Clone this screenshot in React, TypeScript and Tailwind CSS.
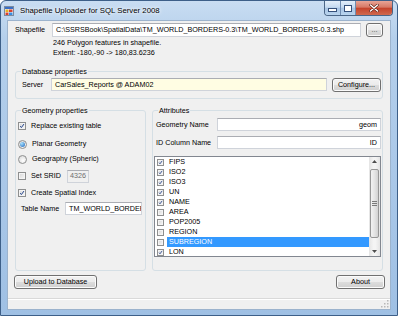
import React from 'react';

const attributes = [
  { name: 'FIPS', checked: true },
  { name: 'ISO2', checked: true },
  { name: 'ISO3', checked: true },
  { name: 'UN', checked: true },
  { name: 'NAME', checked: true },
  { name: 'AREA', checked: false },
  { name: 'POP2005', checked: false },
  { name: 'REGION', checked: false },
  { name: 'SUBREGION', checked: false, selected: true },
  { name: 'LON', checked: true },
];

function Check({ checked, small }: { checked?: boolean; small?: boolean }) {
  return (
    <span
      className={
        (small ? 'w-[7px] h-[7px]' : 'w-[8px] h-[8px]') +
        ' shrink-0 flex items-center justify-center border border-[#8e8f8f] bg-[linear-gradient(135deg,#d6d6d6,#f7f7f7)] shadow-[inset_0_0_0_1px_#f4f4f4]'
      }
    >
      {checked && (
        <svg viewBox="0 0 8 8" className="w-full h-full">
          <path d="M1.6 4.2 L3.2 6.1 L6.6 1.4" fill="none" stroke="#22438c" strokeWidth="1.3" />
        </svg>
      )}
    </span>
  );
}

function Radio({ checked }: { checked?: boolean }) {
  return (
    <span className="w-[9px] h-[9px] shrink-0 rounded-full border border-[#8e8f8f] bg-[radial-gradient(circle_at_60%_65%,#ffffff,#d4d4d4)] flex items-center justify-center">
      {checked && (
        <span className="w-[5px] h-[5px] rounded-full bg-[radial-gradient(circle_at_35%_30%,#a6e1ff,#1f63b8)]" />
      )}
    </span>
  );
}

function TextBox({
  className,
  children,
}: {
  className?: string;
  children?: React.ReactNode;
}) {
  return (
    <div
      className={
        'flex items-center px-[3px] border border-[#cfd3da] border-t-[#abadb3] whitespace-nowrap overflow-hidden ' +
        (className ?? '')
      }
    >
      {children}
    </div>
  );
}

function Button({ className, children }: { className?: string; children?: React.ReactNode }) {
  return (
    <div
      className={
        'flex items-center justify-center rounded-[3px] border border-[#707070] bg-[linear-gradient(to_bottom,#f2f2f2_0%,#ebebeb_50%,#dddddd_50%,#cfcfcf_100%)] shadow-[inset_0_0_0_1px_#fbfbfb] ' +
        (className ?? '')
      }
    >
      {children}
    </div>
  );
}

function AppIcon() {
  return (
    <svg viewBox="0 0 10 10" className="w-[10px] h-[10px]">
      <rect x="0.5" y="0.5" width="9" height="9" fill="#f4f4f4" stroke="#7a8aa0" />
      <rect x="1" y="1" width="8" height="2" fill="#3a6fc4" />
      <rect x="1.5" y="3.5" width="3" height="2.5" fill="#e8b020" />
      <rect x="5" y="3.5" width="3.5" height="2.5" fill="#d8412f" />
      <rect x="1.5" y="6.5" width="3" height="2.5" fill="#d8412f" />
      <rect x="5" y="6.5" width="3.5" height="2.5" fill="#3a8de0" />
    </svg>
  );
}

function CaptionButtons() {
  return (
    <div className="flex self-start h-[15px] mr-[4px] rounded-b-[4px] border border-t-0 border-[#4b6687] overflow-hidden">
      <div className="w-[16px] h-full flex items-center justify-center border-r border-[#6f8cb0] bg-[linear-gradient(to_bottom,#e3eefa_0%,#c5daf0_45%,#a8c4e4_50%,#b9d4ee_100%)]">
        <span className="w-[7px] h-[2px] mt-[4px] bg-white border border-[#35507a] box-content" />
      </div>
      <div className="w-[15px] h-full flex items-center justify-center border-r border-[#6f8cb0] bg-[linear-gradient(to_bottom,#e3eefa_0%,#c5daf0_45%,#a8c4e4_50%,#b9d4ee_100%)]">
        <span className="w-[6px] h-[5px] border-[2px] border-t-[3px] border-white outline outline-1 outline-[#35507a]" />
      </div>
      <div className="w-[36px] h-full flex items-center justify-center bg-[linear-gradient(to_bottom,#e8a496_0%,#d67865_45%,#c4422b_50%,#d06a4f_100%)]">
        <svg viewBox="0 0 10 8" className="w-[10px] h-[8px]">
          <path d="M1.5 1 L8.5 7 M8.5 1 L1.5 7" stroke="#5a1c12" strokeWidth="2.6" strokeLinecap="round" />
          <path d="M1.5 1 L8.5 7 M8.5 1 L1.5 7" stroke="#ffffff" strokeWidth="1.5" strokeLinecap="round" />
        </svg>
      </div>
    </div>
  );
}

function ScrollBar() {
  return (
    <div className="w-[11px] h-full flex flex-col bg-[linear-gradient(to_right,#e4e4e4,#f4f4f4_40%,#f4f4f4_60%,#e4e4e4)]">
      <div className="h-[10px] flex items-center justify-center">
        <svg viewBox="0 0 5 3" className="w-[5px] h-[3px]">
          <path d="M0 3 L2.5 0 L5 3 Z" fill="#4d4d4d" />
        </svg>
      </div>
      <div className="flex-1 pt-[2px] pb-[9px] px-[1px] flex flex-col">
        <div className="h-[69px] rounded-[2px] border border-[#969696] bg-[linear-gradient(to_right,#f2f2f2,#e4e4e4_50%,#d2d2d2)] flex flex-col items-center justify-center gap-[1px]">
          <span className="w-[5px] h-[1px] bg-[#7a7a7a]" />
          <span className="w-[5px] h-[1px] bg-[#7a7a7a]" />
          <span className="w-[5px] h-[1px] bg-[#7a7a7a]" />
        </div>
      </div>
      <div className="h-[10px] flex items-center justify-center">
        <svg viewBox="0 0 5 3" className="w-[5px] h-[3px]">
          <path d="M0 0 L2.5 3 L5 0 Z" fill="#4d4d4d" />
        </svg>
      </div>
    </div>
  );
}

export default function App() {
  return (
    <div className="w-[398px] h-[316px] overflow-hidden font-['Liberation_Sans',Arial,sans-serif] text-[7.2px] leading-[10px] text-black">
      <div className="w-full h-full flex flex-col rounded-t-[6px] border border-[#3d5f88] bg-[linear-gradient(to_bottom,#c9ddf2_0%,#b4cfeb_12%,#a9c7e8_60%,#9fc0e4_100%)]">
        {/* title bar */}
        <div className="h-[19px] flex items-start shrink-0">
          <div className="h-full flex items-center pl-[3px] gap-[6px] flex-1">
            <AppIcon />
            <span className="text-[7.8px] [text-shadow:0_0_5px_#ffffff,0_0_3px_#ffffff]">
              Shapefile Uploader for SQL Server 2008
            </span>
          </div>
          <CaptionButtons />
        </div>

        {/* client area */}
        <div className="flex-1 mx-[6px] mb-[5px] border border-[#9cb3cd] bg-[#f0f0f0] flex flex-col">
          {/* shapefile row */}
          <div className="flex items-center mt-[2px] pl-[7px] h-[14px]">
            <span className="w-[37px]">Shapefile</span>
            <TextBox className="w-[309px] h-[14px] bg-white">
              C:\SSRSBook\SpatialData\TM_WORLD_BORDERS-0.3\TM_WORLD_BORDERS-0.3.shp
            </TextBox>
            <Button className="w-[17px] h-[14px] ml-[5px] text-[#444]">...</Button>
          </div>

          <div className="ml-[45px] mt-[1px]">
            <div>246 Polygon features in shapefile.</div>
            <div>Extent: -180,-90 -&gt; 180,83.6236</div>
          </div>

          {/* database properties */}
          <fieldset className="mx-[7px] mt-[9px] border border-[#d5dfe5] rounded-[3px] pl-[6px] pr-[1px] pt-[1px] pb-[6px]">
            <legend className="leading-[9px] px-[1px] -ml-[1px]">Database properties</legend>
            <div className="flex items-center h-[15px]">
              <span className="w-[29px]">Server</span>
              <TextBox className="w-[276px] h-[13px] bg-[#fffde3]">CarSales_Reports @ ADAM02</TextBox>
              <Button className="w-[49px] h-[14px] ml-[5px]">Configure...</Button>
            </div>
          </fieldset>

          {/* geometry + attributes */}
          <div className="flex mx-[7px] mt-[7px] gap-[6px]">
            <fieldset className="w-[131px] h-[165px] border border-[#d5dfe5] rounded-[3px] pl-[2px] pr-[3px] pt-[4px]">
              <legend className="leading-[9px] px-[1px] ml-[3px]">Geometry properties</legend>
              <div className="flex items-center gap-[5px] h-[14px]">
                <Check checked />
                <span>Replace existing table</span>
              </div>
              <div className="flex items-center gap-[5px] h-[14px] mt-[4px]">
                <Radio checked />
                <span>Planar Geometry</span>
              </div>
              <div className="flex items-center gap-[5px] h-[14px] mt-[1px]">
                <Radio />
                <span>Geography (Spheric)</span>
              </div>
              <div className="flex items-center gap-[5px] h-[14px] mt-[3px]">
                <Check />
                <span className="w-[31px]">Set SRID</span>
                <TextBox className="w-[22px] h-[13px] justify-center text-[#6d6d6d]">4326</TextBox>
              </div>
              <div className="flex items-center gap-[5px] h-[14px] mt-[3px]">
                <Check checked />
                <span>Create Spatial Index</span>
              </div>
              <div className="flex items-center h-[13px] mt-[2px]">
                <span className="w-[44px] ml-[3px]">Table Name</span>
                <TextBox className="w-[77px] h-[13px] bg-white">TM_WORLD_BORDERS</TextBox>
              </div>
            </fieldset>

            <fieldset className="w-[231px] h-[165px] border border-[#d5dfe5] rounded-[3px] px-[1px] pt-[3px]">
              <legend className="leading-[9px] px-[1px] ml-[4px]">Attributes</legend>
              <div className="flex items-center h-[13px]">
                <span className="w-[61px] ml-[2px]">Geometry Name</span>
                <TextBox className="w-[164px] h-[13px] bg-white justify-end">geom</TextBox>
              </div>
              <div className="flex items-center h-[13px] mt-[5px]">
                <span className="w-[61px] ml-[2px]">ID Column Name</span>
                <TextBox className="w-[164px] h-[13px] bg-white justify-end">ID</TextBox>
              </div>
              <div className="mt-[7px] w-[227px] h-[101px] border border-[#828790] bg-white flex">
                <div className="flex-1 flex flex-col">
                  {attributes.map((a) => (
                    <div key={a.name} className="h-[10px] flex items-center pl-[2px]">
                      <Check checked={a.checked} small />
                      <span
                        className={
                          'ml-[3px] flex-1 h-full pl-[2px] flex items-center ' +
                          (a.selected ? 'bg-[#3399ff] text-white' : '')
                        }
                      >
                        {a.name}
                      </span>
                    </div>
                  ))}
                </div>
                <ScrollBar />
              </div>
            </fieldset>
          </div>

          {/* buttons */}
          <div className="flex justify-between mt-[4px] pl-[6px] pr-[5px]">
            <Button className="w-[83px] h-[14px]">Upload to Database</Button>
            <Button className="w-[49px] h-[14px]">About</Button>
          </div>

          {/* status strip */}
          <div className="mt-auto h-[11px] border-t border-[#d9d9d9] shadow-[inset_0_1px_0_#ffffff] flex justify-end items-end pr-[1px] pb-[1px]">
            <svg viewBox="0 0 8 8" className="w-[8px] h-[8px]">
              <rect x="6" y="0" width="1.5" height="1.5" fill="#b8b8b8" />
              <rect x="3" y="3" width="1.5" height="1.5" fill="#b8b8b8" />
              <rect x="6" y="3" width="1.5" height="1.5" fill="#b8b8b8" />
              <rect x="0" y="6" width="1.5" height="1.5" fill="#b8b8b8" />
              <rect x="3" y="6" width="1.5" height="1.5" fill="#b8b8b8" />
              <rect x="6" y="6" width="1.5" height="1.5" fill="#b8b8b8" />
            </svg>
          </div>
        </div>
      </div>
    </div>
  );
}
